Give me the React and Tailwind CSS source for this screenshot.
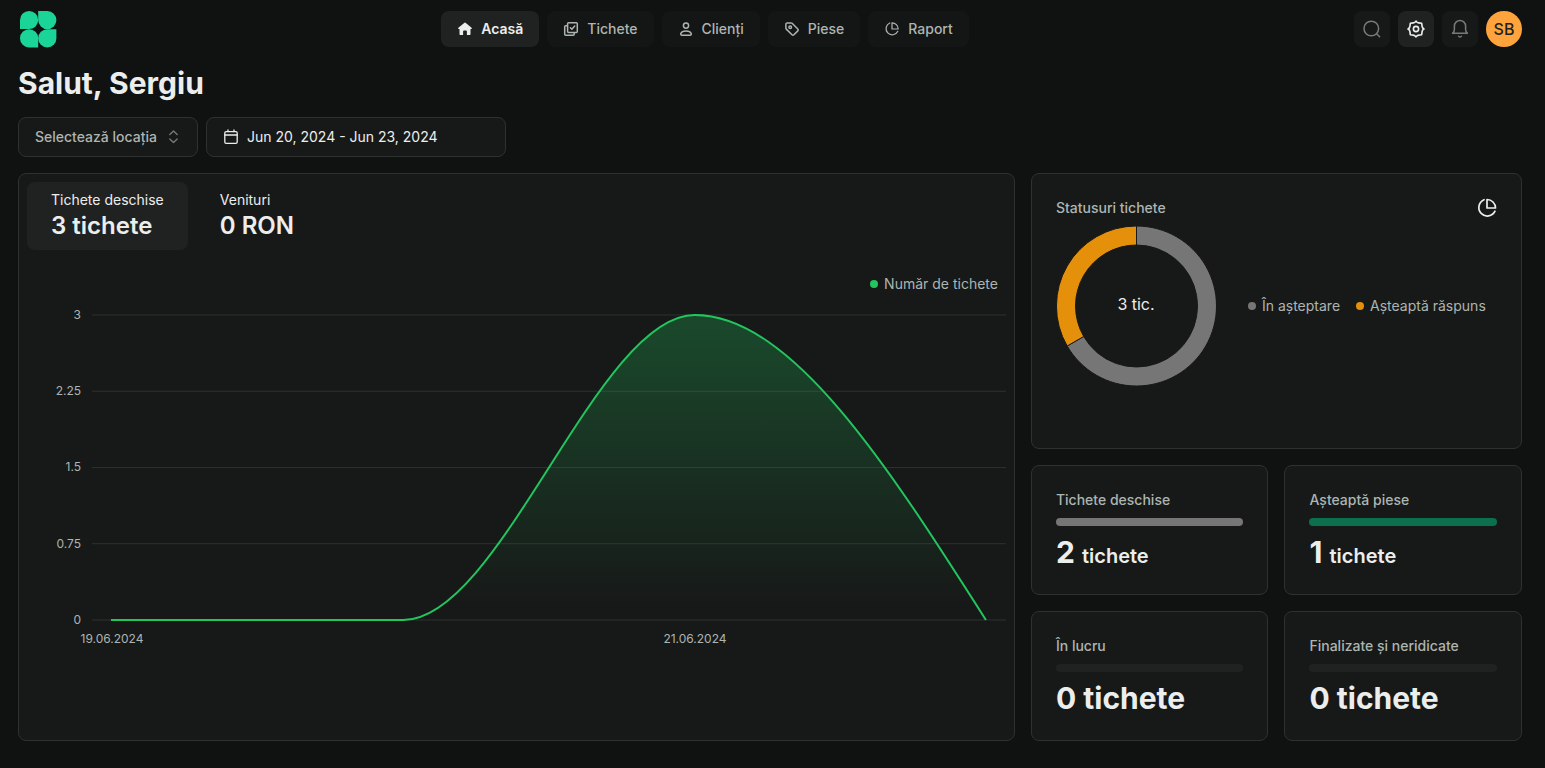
import React from "react";

const stroke = {
  fill: "none",
  stroke: "currentColor",
  strokeWidth: 1.5,
  strokeLinecap: "round",
  strokeLinejoin: "round",
  "aria-hidden": true,
};

function Logo() {
  return (
    <svg className="h-9 w-[38px] overflow-visible" viewBox="0 0 38 36" fill="#1bd497" aria-hidden="true">
      <path d="M2 18.1V9a9.1 9.1 0 1 1 9.1 9.1z" />
      <path d="M20.2 0h9.1a9.1 9.1 0 1 1-9.1 9.1z" />
      <path d="M20.2 36.4h-9.1a9.1 9.1 0 1 1 9.1-9.1z" />
      <path d="M38.4 18.2v9.1a9.1 9.1 0 1 1-9.1-9.1z" />
    </svg>
  );
}

function HomeIcon() {
  return (
    <svg className="size-4" viewBox="0 0 16 16" fill="currentColor" aria-hidden="true">
      <path d="M7.2 1.9a1.3 1.3 0 0 1 1.6 0l5.8 4.8c.5.5.2 1.3-.5 1.3h-.6v4.9a1.2 1.2 0 0 1-1.2 1.2H9.9v-3.6a.9.9 0 0 0-.9-.9H7a.9.9 0 0 0-.9.9v3.600H3.700a1.200 1.200 0 0 1-1.200-1.200V8h-.6c-.7 0-1-.8-.5-1.300z" />
    </svg>
  );
}

function TicketsIcon() {
  return (
    <svg className="size-4" viewBox="0 0 16 16" {...stroke}>
      <rect x="4.6" y="1.7" width="9.7" height="9.7" rx="1" />
      <path d="M4.3 4.8H2.7a1 1 0 0 0-1 1v7.500a1 1 0 0 0 1 1h7.500a1 1 0 0 0 1-1v-1.600M7.400 6.700l1.500 1.500 2.800-3.200" />
    </svg>
  );
}

function UserIcon() {
  return (
    <svg className="size-4" viewBox="0 0 16 16" {...stroke}>
      <circle cx="8" cy="4.6" r="2.6" />
      <path d="M8 10c2.500 0 4.600.9 5.200 2.500.3.900-.3 1.700-1.200 1.700H4c-.9 0-1.500-.8-1.200-1.700C3.400 10.900 5.500 10 8 10z" />
    </svg>
  );
}

function TagIcon() {
  return (
    <svg className="size-4" viewBox="0 0 16 16" {...stroke}>
      <path d="M1.900 3.300v3.800c0 .4.1.7.4 1l5.700 5.700c.5.500 1.400.5 1.900 0l3.900-3.900c.5-.5.5-1.400 0-1.900L8.100 2.300c-.3-.3-.6-.4-1-.4H3.300c-.8 0-1.400.6-1.400 1.400z" />
      <circle cx="6.200" cy="6.200" r="1.300" />
    </svg>
  );
}

function PieIcon({ className, viewBox = "0 0 20 20" }) {
  return (
    <svg className={className} viewBox={viewBox} {...stroke} strokeWidth="1.700">
      <path d="M7 1.700a8.500 8.500 0 1 0 11 11.500" />
      <path d="M10 1.500a8.500 8.500 0 0 1 8.500 8.500H10z" />
    </svg>
  );
}

function SearchIcon() {
  return (
    <svg className="size-5" viewBox="0 0 20 20" {...stroke}>
      <circle cx="9.300" cy="9.500" r="7.300" />
      <path d="M14.600 14.800l3 3" />
    </svg>
  );
}

function GearIcon() {
  return (
    <svg className="size-5" viewBox="0 0 20 20" {...stroke} strokeWidth="1.600">
      <circle cx="10" cy="10" r="2.600" />
      <path d="M10 2Q10.900 3.900 12.600 3.900L15.700 4.300L16.100 7.400Q16.200 9.100 18 10Q16.200 10.900 16.100 12.600L15.700 15.700L12.600 16.100Q10.900 16.200 10 18Q9.100 16.200 7.400 16.100L4.300 15.700L3.900 12.600Q3.800 10.900 2 10Q3.800 9.100 3.900 7.400L4.300 4.300L7.400 3.900Q9.100 3.800 10 2z" />
    </svg>
  );
}

function BellIcon() {
  return (
    <svg className="size-5" viewBox="0 0 20 20" {...stroke}>
      <path d="M2.600 14.200h14.800c-1-.8-1.800-1.800-1.800-3.600V7.100a5.600 5.600 0 0 0-11.200 0v3.500c0 1.800-.8 2.800-1.800 3.600z" />
      <path d="M8.600 17.200c.4.900 2.400.9 2.800 0" />
    </svg>
  );
}

function CalendarIcon() {
  return (
    <svg className="size-4" viewBox="0 0 16 16" {...stroke} strokeWidth="1.300">
      <rect x="1.800" y="2.600" width="12.400" height="11.800" rx="1.400" />
      <path d="M1.800 6h12.400M5 .9v1.700M11 .9v1.700" />
    </svg>
  );
}

function ChevronsIcon() {
  return (
    <svg className="size-4" viewBox="0 0 16 16" {...stroke} strokeWidth="1.300">
      <path d="M3.800 5.500L7.500 2l3.700 3.500M3.800 10L7.500 13.500l3.700-3.500" />
    </svg>
  );
}

const NAV = [
  { label: "Acasă", icon: <HomeIcon />, active: true },
  { label: "Tichete", icon: <TicketsIcon /> },
  { label: "Clienți", icon: <UserIcon /> },
  { label: "Piese", icon: <TagIcon /> },
  { label: "Raport", icon: <PieIcon className="size-4" viewBox="-1 -1 22 22" /> },
];

function Header() {
  return (
    <header className="flex items-center justify-between pt-[11px]">
      <a href="#" aria-label="Pagina principală">
        <Logo />
      </a>
      <nav className="flex gap-2">
        {NAV.map((item) => (
          <a
            key={item.label}
            href="#"
            aria-current={item.active ? "page" : undefined}
            className={
              item.active
                ? "flex h-9 items-center gap-2 rounded-lg bg-[#202221] px-4 text-sm font-semibold text-[#eceeed]"
                : "flex h-9 items-center gap-2 rounded-lg bg-[#141615] px-4 text-sm font-medium text-[#adb5b2]"
            }
          >
            {item.icon}
            {item.label}
          </a>
        ))}
      </nav>
      <div className="flex gap-2">
        <button type="button" aria-label="Caută" className="flex size-9 items-center justify-center rounded-lg bg-[#171918] text-[#777b79]">
          <SearchIcon />
        </button>
        <button type="button" aria-label="Setări" className="flex size-9 items-center justify-center rounded-lg bg-[#202221] text-[#eceeed]">
          <GearIcon />
        </button>
        <button type="button" aria-label="Notificări" className="flex size-9 items-center justify-center rounded-lg bg-[#171918] text-[#777b79]">
          <BellIcon />
        </button>
        <button type="button" className="size-9 rounded-full bg-[#ffa43c] text-base font-medium text-[#202221]">
          SB
        </button>
      </div>
    </header>
  );
}

function Filters() {
  return (
    <div className="mt-4 flex gap-2 text-sm">
      <div className="relative w-[180px]">
        <select
          aria-label="Locația"
          className="h-10 w-full appearance-none rounded-lg border border-[#2e3130] bg-[#171918] px-4 font-medium text-[#adb5b2]"
        >
          <option>Selectează locația</option>
        </select>
        <span className="pointer-events-none absolute inset-y-0 right-4 flex items-center text-[#777b79]">
          <ChevronsIcon />
        </span>
      </div>
      <button
        type="button"
        className="flex h-10 w-[300px] items-center gap-2 rounded-lg border border-[#2e3130] bg-[#171918] px-4 text-[#eceeed]"
      >
        <CalendarIcon />
        Jun 20, 2024 - Jun 23, 2024
      </button>
    </div>
  );
}

const TICKS = [
  { label: "3", y: 19 },
  { label: "2.25", y: 95.25 },
  { label: "1.5", y: 171.5 },
  { label: "0.75", y: 247.75 },
  { label: "0", y: 324 },
];

const CURVE = "M84 324H376.300C473.400 324 570.600 19 667.700 19C764.800 19 861.900 171.500 959 324";

function TicketsChart() {
  return (
    <svg viewBox="0 0 979 360" className="w-full" role="img" aria-label="Număr de tichete">
      <defs>
        <linearGradient id="area" x1="0" y1="0" x2="0" y2="1">
          <stop offset="5%" stopColor="#22c55e" stopOpacity="0.270" />
          <stop offset="95%" stopColor="#22c55e" stopOpacity="0" />
        </linearGradient>
      </defs>
      {TICKS.map((t) => (
        <g key={t.label}>
          <line x1="65" x2="979" y1={t.y} y2={t.y} stroke="#2e3130" />
          <text x="54" y={t.y + 4} textAnchor="end" className="fill-[#adb5b2] text-xs">
            {t.label}
          </text>
        </g>
      ))}
      <path d={CURVE + "Z"} fill="url(#area)" />
      <path d={CURVE} fill="none" stroke="#22c55e" strokeWidth="2" />
      <text x="85" y="347" textAnchor="middle" className="fill-[#adb5b2] text-xs">19.06.2024</text>
      <text x="668" y="347" textAnchor="middle" className="fill-[#adb5b2] text-xs">21.06.2024</text>
    </svg>
  );
}

function Legend({ color, children }) {
  return (
    <span className="flex items-center gap-[6px] text-sm text-[#adb5b2]">
      <span className={color + " size-2 rounded-full"} />
      {children}
    </span>
  );
}

function ChartCard() {
  return (
    <section className="rounded-lg border border-[#2e3130] bg-[#171918] p-2">
      <div className="flex gap-2">
        <button type="button" className="rounded-lg bg-[#202221] px-6 py-2 text-left">
          <span className="block text-sm">Tichete deschise</span>
          <span className="block text-2xl font-semibold">3 tichete</span>
        </button>
        <button type="button" className="rounded-lg px-6 py-2 text-left">
          <span className="block text-sm">Venituri</span>
          <span className="block text-2xl font-semibold">0 RON</span>
        </button>
      </div>
      <div className="mt-[22px] flex h-6 justify-end pr-2">
        <Legend color="bg-[#22c55e]">Număr de tichete</Legend>
      </div>
      <TicketsChart />
    </section>
  );
}

function StatusCard() {
  return (
    <section className="col-span-2 rounded-lg border border-[#2e3130] bg-[#171918] p-6">
      <div className="flex items-center justify-between">
        <h2 className="text-sm font-medium text-[#adb5b2]">Statusuri tichete</h2>
        <PieIcon className="size-5" />
      </div>
      <div className="mt-2 flex h-[198px] items-start gap-8">
        <svg viewBox="0 0 160 160" className="size-40 shrink-0" role="img" aria-label="Statusuri tichete">
          <path d="M80.500 0A80 80 0 1 1 11.200 120L27.700 110.500A61 61 0 1 0 80.500 19z" fill="#767676" stroke="#171918" />
          <path d="M11.200 120A80 80 0 0 1 80.500 0V19A61 61 0 0 0 27.700 110.500z" fill="#e5900a" stroke="#171918" />
          <text x="80" y="84" textAnchor="middle" className="fill-[#eceeed] text-base">3 tic.</text>
        </svg>
        <div className="flex h-40 items-center gap-4">
          <Legend color="bg-[#767676]">În așteptare</Legend>
          <Legend color="bg-[#e5900a]">Așteaptă răspuns</Legend>
        </div>
      </div>
    </section>
  );
}

function StatCard({ label, bar, children }) {
  return (
    <section className="rounded-lg border border-[#2e3130] bg-[#171918] p-6">
      <h2 className="text-sm font-medium text-[#adb5b2]">{label}</h2>
      <div className={bar + " my-2 h-2 rounded-full"} />
      <p className="text-3xl font-bold">{children}</p>
    </section>
  );
}

export default function App() {
  return (
    <div className="min-h-screen bg-[#101211] pr-[23px] pb-[27px] pl-[18px] font-['Inter',sans-serif] text-[#eceeed]">
      <Header />
      <h1 className="mt-[18px] text-3xl font-bold">Salut, Sergiu</h1>
      <Filters />
      <main className="mt-4 grid grid-cols-[67fr_33fr] gap-4">
        <ChartCard />
        <div className="grid grid-cols-2 gap-4">
          <StatusCard />
          <StatCard label="Tichete deschise" bar="bg-[#767676]">
            2 <span className="text-xl font-semibold">tichete</span>
          </StatCard>
          <StatCard label="Așteaptă piese" bar="bg-[#0c704e]">
            1 <span className="text-xl font-semibold">tichete</span>
          </StatCard>
          <StatCard label="În lucru" bar="bg-[#202221]">0 tichete</StatCard>
          <StatCard label="Finalizate și neridicate" bar="bg-[#202221]">0 tichete</StatCard>
        </div>
      </main>
    </div>
  );
}
